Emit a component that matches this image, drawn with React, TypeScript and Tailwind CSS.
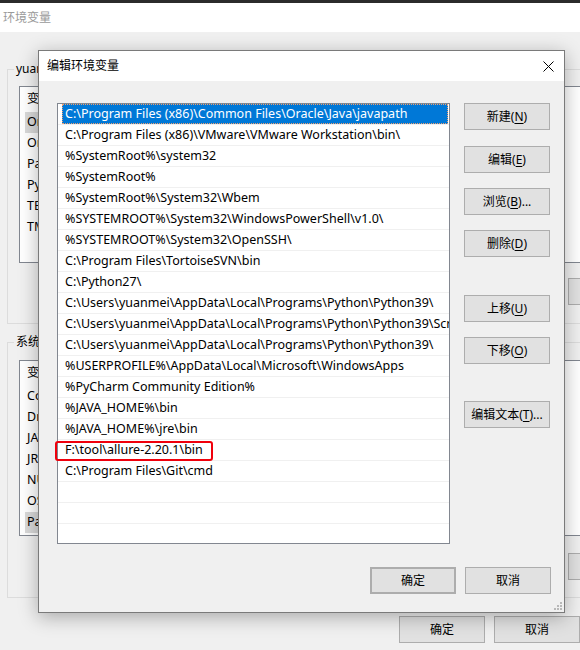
import React from "react";

const paths: string[] = [
  "C:\\Program Files (x86)\\Common Files\\Oracle\\Java\\javapath",
  "C:\\Program Files (x86)\\VMware\\VMware Workstation\\bin\\",
  "%SystemRoot%\\system32",
  "%SystemRoot%",
  "%SystemRoot%\\System32\\Wbem",
  "%SYSTEMROOT%\\System32\\WindowsPowerShell\\v1.0\\",
  "%SYSTEMROOT%\\System32\\OpenSSH\\",
  "C:\\Program Files\\TortoiseSVN\\bin",
  "C:\\Python27\\",
  "C:\\Users\\yuanmei\\AppData\\Local\\Programs\\Python\\Python39\\",
  "C:\\Users\\yuanmei\\AppData\\Local\\Programs\\Python\\Python39\\Scripts\\",
  "C:\\Users\\yuanmei\\AppData\\Local\\Programs\\Python\\Python39\\",
  "%USERPROFILE%\\AppData\\Local\\Microsoft\\WindowsApps",
  "%PyCharm Community Edition%",
  "%JAVA_HOME%\\bin",
  "%JAVA_HOME%\\jre\\bin",
  "F:\\tool\\allure-2.20.1\\bin",
  "C:\\Program Files\\Git\\cmd",
];

const userVars = ["OneDrive", "OneDriveConsumer", "Path", "PyCharm Community Edition", "TEMP", "TMP"];
const sysVars = ["ComSpec", "DriverData", "JAVA_HOME", "JRE_HOME", "NUMBER_OF_PROCESSORS", "OS", "Path"];

function Btn({ children, extra = "" }: { children: React.ReactNode; extra?: string }) {
  return (
    <div
      className={
        "h-[27px] w-[86px] shrink-0 flex items-center justify-center bg-[#e1e1e1] border border-[#adadad] text-[12px] leading-none text-black " +
        extra
      }
    >
      {children}
    </div>
  );
}

function U({ c }: { c: string }) {
  return <span className="underline underline-offset-[2px]">{c}</span>;
}

function BgList({
  items,
  selected,
  height,
  scroll,
}: {
  items: string[];
  selected: number;
  height: string;
  scroll: boolean;
}) {
  return (
    <div className={"ml-[11px] w-[620px] border border-[#828790] bg-white flex " + height}>
      <div className="w-[528px] flex flex-col">
        <div className="h-[25px] flex items-center pl-[7px] text-[12.5px]">变量</div>
        {items.map((t, i) => (
          <div key={i} className="h-[21px] flex items-stretch pl-[5px]">
            <div className={"flex-1 flex items-center pl-[2px] text-[12.5px] " + (i === selected ? "bg-[#d9d9d9]" : "")}>
              {t}
            </div>
          </div>
        ))}
      </div>
      <div className="w-[17px] bg-[#f0f0f0] border-l border-[#e6e6e6] flex flex-col items-center">
        {scroll ? (
          <>
            <div className="h-[17px] w-full flex items-center justify-center">
              <svg width="9" height="6" viewBox="0 0 9 6">
                <path d="M1 5 L4.5 1.5 L8 5" stroke="#606060" strokeWidth="1.4" fill="none" />
              </svg>
            </div>
            <div className="mt-[1px] h-[48px] w-[15px] bg-[#cdcdcd]" />
          </>
        ) : null}
      </div>
    </div>
  );
}

function GroupBox({ label, children, height }: { label: string; children: React.ReactNode; height: string }) {
  return (
    <div className={"relative w-[640px] border border-[#dcdcdc] " + height}>
      <div className="absolute left-[6px] top-[-9px] bg-[#f0f0f0] px-[2px] text-[12px] leading-[16px] text-black">
        {label}
      </div>
      {children}
    </div>
  );
}

export default function App() {
  return (
    <div className="relative w-[580px] h-[650px] overflow-hidden bg-[#f0f0f0] font-['Noto_Sans','Noto_Sans_CJK_SC',sans-serif] text-black">
      {/* background window */}
      <div className="h-[3px] bg-[#2b2b2b]" />
      <div className="h-[29px] bg-white flex items-center pl-[3px] text-[12px] text-[#9a9a9a]">环境变量</div>
      <div className="pl-[7px] flex flex-col">
        <div className="mt-[37px]">
          <GroupBox label="yuanmei 的用户变量(U)" height="h-[255px]">
            <div className="pt-[16px]">
              <BgList items={userVars} selected={0} height="h-[177px]" scroll={false} />
            </div>
            <div className="mt-[15px] flex gap-[9px] pl-[370px]">
              <Btn>新建(N)...</Btn>
              <Btn>编辑(E)...</Btn>
              <Btn>删除(D)</Btn>
            </div>
          </GroupBox>
        </div>
        <div className="mt-[18px]">
          <GroupBox label="系统变量(S)" height="h-[256px]">
            <div className="pt-[17px]">
              <BgList items={sysVars} selected={6} height="h-[176px]" scroll={true} />
            </div>
            <div className="mt-[17px] flex gap-[9px] pl-[370px]">
              <Btn>新建(W)...</Btn>
              <Btn>编辑(I)...</Btn>
              <Btn>删除(L)</Btn>
            </div>
          </GroupBox>
        </div>
        <div className="mt-[18px] flex gap-[9px] pl-[392px]">
          <Btn>确定</Btn>
          <Btn>取消</Btn>
        </div>
      </div>

      {/* dialog */}
      <div className="absolute left-[38px] top-[50px] w-[527px] h-[563px] border border-[#7a7a7a] bg-[#f0f0f0] shadow-[0_4px_18px_rgba(0,0,0,0.3)] flex flex-col">
        <div className="h-[30px] bg-white flex items-center justify-between pl-[8px] pr-[10px] shrink-0">
          <span className="text-[12px] text-black">编辑环境变量</span>
          <svg width="11" height="11" viewBox="0 0 11 11">
            <path d="M0.5 0.5 L10.5 10.5 M10.5 0.5 L0.5 10.5" stroke="#000" strokeWidth="1" />
          </svg>
        </div>
        <div className="flex pl-[18px] pt-[22px]">
          <div className="w-[393px] h-[441px] border border-[#828790] bg-white flex flex-col">
            {paths.map((p, i) => (
              <div key={i} className="relative h-[21px] shrink-0 border-b border-[#f0f0f0] flex items-stretch">
                {i === 0 ? (
                  <div className="ml-[4px] mr-[1px] flex-1 bg-[#0078d7] text-white pl-[3px] flex items-center text-[12.5px] whitespace-nowrap overflow-hidden outline-1 outline-dotted outline-offset-[-1px] outline-[#f0a070]">
                    {p}
                  </div>
                ) : (
                  <div className="flex-1 pl-[7px] pr-[5px] flex items-center text-[12.5px] whitespace-nowrap overflow-hidden">
                    {p}
                  </div>
                )}
                {i === 16 ? (
                  <div className="absolute left-[-3px] top-[1px] w-[158px] h-[20px] border-2 border-[#f0000c] rounded-[3px]" />
                ) : null}
              </div>
            ))}
            <div className="h-[21px] shrink-0 border-b border-[#f0f0f0]" />
            <div className="h-[21px] shrink-0 border-b border-[#f0f0f0]" />
            <div className="flex-1" />
          </div>
          <div className="ml-[14px] flex flex-col">
            <Btn>
              新建(<U c="N" />)
            </Btn>
            <Btn extra="mt-[16px]">
              编辑(<U c="E" />)
            </Btn>
            <Btn extra="mt-[15px]">
              浏览(<U c="B" />)...
            </Btn>
            <Btn extra="mt-[15px]">
              删除(<U c="D" />)
            </Btn>
            <Btn extra="mt-[38px]">
              上移(<U c="U" />)
            </Btn>
            <Btn extra="mt-[15px]">
              下移(<U c="O" />)
            </Btn>
            <Btn extra="mt-[37px]">
              编辑文本(<U c="T" />)...
            </Btn>
          </div>
        </div>
        <div className="mt-[23px] flex justify-end gap-[9px] pr-[13px]">
          <Btn extra="border-2 border-[#0078d7]">确定</Btn>
          <Btn>取消</Btn>
        </div>
        <svg className="absolute right-[2px] bottom-[2px]" width="8" height="8" viewBox="0 0 8 8">
          <rect x="6" y="0" width="2" height="2" fill="#b8b8b8" />
          <rect x="3" y="3" width="2" height="2" fill="#b8b8b8" />
          <rect x="6" y="3" width="2" height="2" fill="#b8b8b8" />
          <rect x="0" y="6" width="2" height="2" fill="#b8b8b8" />
          <rect x="3" y="6" width="2" height="2" fill="#b8b8b8" />
          <rect x="6" y="6" width="2" height="2" fill="#b8b8b8" />
        </svg>
      </div>
    </div>
  );
}
